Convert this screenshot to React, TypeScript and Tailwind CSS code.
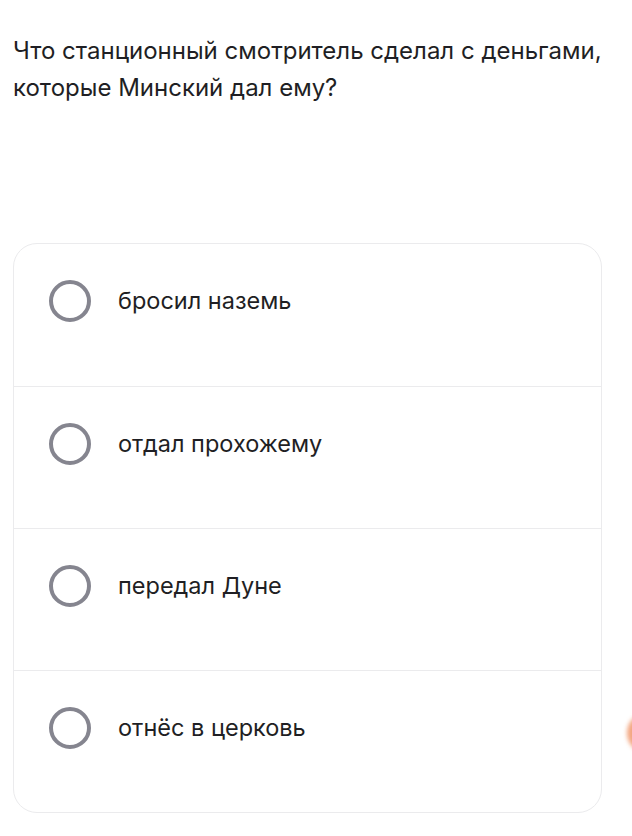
import React, { useState } from "react";

const options = ["бросил наземь", "отдал прохожему", "передал Дуне", "отнёс в церковь"];

const App = () => {
    const [selected, setSelected] = useState<number | null>(null);

    return (
        <div
            className="relative w-[632px] h-[836px] overflow-hidden bg-white text-[#1f1f24]"
            style={{ fontFamily: "Inter, 'Noto Sans', sans-serif" }}
        >
            <div className="px-[13px] pt-[32px]">
                <h2 className="text-[24px] leading-[37px] font-normal">
                    Что станционный смотритель сделал с деньгами, которые Минский дал ему?
                </h2>
            </div>

            <div className="mt-[137px] ml-[13px] w-[589px] border border-[#ebebed] rounded-[24px]">
                {options.map((text, i) => (
                    <button
                        key={text}
                        type="button"
                        onClick={() => setSelected(i)}
                        className={
                            "flex w-full h-[142px] items-start gap-[27px] pl-[35px] pt-[36px] text-left " +
                            (i > 0 ? "border-t border-[#ebebed]" : "")
                        }
                    >
                        <span className="flex items-center justify-center w-[42px] h-[42px] shrink-0 rounded-full border-[4px] border-[#85858f]">
                            {selected === i && <span className="w-[20px] h-[20px] rounded-full bg-[#85858f]" />}
                        </span>
                        <span className="text-[23.5px] leading-[42px]">{text}</span>
                    </button>
                ))}
            </div>

            {/* floating helper bubble peeking from the right edge */}
            <div className="absolute left-[627px] top-[713px] w-[40px] h-[40px] rounded-full bg-[#f3a680] blur-[2px]" />
        </div>
    );
};

export default App;
